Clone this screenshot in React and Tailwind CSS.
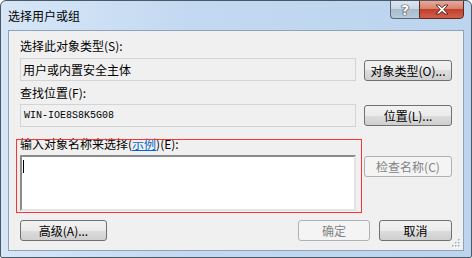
import React from 'react';

const cjk = "font-['Noto_Sans_CJK_SC',sans-serif]";

const Btn = ({ children, disabled, className = '' }) => (
  <div
    className={`h-[21px] rounded-[3px] border flex items-center justify-center text-[12px] leading-[12px] ${cjk} ${
      disabled
        ? 'border-[#adb2b5] bg-[#f4f4f4] text-[#838383]'
        : 'border-[#707070] bg-[linear-gradient(#f2f2f2_0%,#ebebeb_50%,#dddddd_50%,#cfcfcf_100%)] text-black'
    } ${className}`}
  >
    {children}
  </div>
);

const Field = ({ children }) => (
  <div className="h-[23px] w-[336px] border border-[#d4d4d4] bg-[#f0f0f0] px-[2px] flex items-center">
    {children}
  </div>
);

const SizeGrip = () => (
  <svg width="10" height="10" viewBox="0 0 10 10" className="absolute right-[2px] bottom-[2px]">
    {[
      [7, 1],
      [4, 4],
      [7, 4],
      [1, 7],
      [4, 7],
      [7, 7],
    ].map(([x, y]) => (
      <g key={`${x}-${y}`}>
        <rect x={x + 1} y={y + 1} width="1.5" height="1.5" fill="#ffffff" />
        <rect x={x} y={y} width="1.5" height="1.5" fill="#a0a8b2" />
      </g>
    ))}
  </svg>
);

export default function App() {
  return (
    <div className="w-[472px] h-[258px] bg-white">
      <div className="relative w-[472px] h-[258px] border border-[#4b5866] rounded-t-[6px] rounded-b-[2px] bg-[linear-gradient(90deg,#d6e6f7_0%,#c3d9f1_40%,#bcd4ee_100%)] overflow-hidden">
        {/* title bar */}
        <div className="h-[29px] flex items-start">
          <div className={`pl-[7px] pt-[8px] text-[12px] leading-[14px] text-black ${cjk}`}>选择用户或组</div>
          <div className="ml-auto mr-[7px] flex h-[19px] -mt-px">
            <div className="w-[29px] h-[19px] border border-[#5b6777] border-r-0 rounded-bl-[4px] bg-[linear-gradient(#dbe6f1_0%,#c8d6e4_45%,#a9bccf_50%,#b8cadb_100%)] flex items-center justify-center">
              <span className="text-white font-bold text-[14px] leading-[14px] font-['DejaVu_Sans',sans-serif] [text-shadow:0_0_1px_#333,0_0_1px_#333,0_0_1px_#333]">?</span>
            </div>
            <div className="w-[45px] h-[19px] border border-[#5a2a22] rounded-br-[4px] bg-[linear-gradient(#e9a99b_0%,#d88370_45%,#c2402c_50%,#d0604b_100%)] flex items-center justify-center">
              <svg width="14" height="11" viewBox="0 0 14 11">
                <path
                  d="M1 1 L4 1 L7 3.6 L10 1 L13 1 L8.8 5.5 L13 10 L10 10 L7 7.4 L4 10 L1 10 L5.2 5.5 Z"
                  fill="#ffffff"
                  stroke="#4a2018"
                  strokeWidth="0.9"
                  strokeLinejoin="round"
                />
              </svg>
            </div>
          </div>
        </div>

        {/* client area */}
        <div className="ml-[7px] w-[456px] h-[221px] border border-[#8fa3b8] bg-[#f0f0f0] relative">
          <div className={`pl-[11px] pt-[9px] text-[12px] text-black ${cjk}`}>
            <div className="h-[12px] leading-[12px]">选择此对象类型(S):</div>
            <div className="mt-[6px] flex items-start">
              <Field>
                <span className="leading-[12px]">用户或内置安全主体</span>
              </Field>
              <Btn className="ml-[8px] mt-[2px] w-[88px]">对象类型(O)...</Btn>
            </div>

            <div className="mt-[6px] h-[12px] leading-[12px]">查找位置(F):</div>
            <div className="mt-[5px] flex items-start">
              <Field>
                <span className="font-['Liberation_Mono',monospace] text-[10px] leading-[12px] pl-[1px]">WIN-IOE8S8K5G08</span>
              </Field>
              <Btn className="ml-[8px] mt-[1px] w-[88px]">位置(L)...</Btn>
            </div>

            <div className="mt-[11px] h-[12px] leading-[12px]">
              输入对象名称来选择(<span className="text-[#0066cc] underline">示例</span>)(E):
            </div>
            <div className="mt-[5px] flex items-start">
              <div className="w-[336px] h-[56px] border-2 border-t-[#8a8a8a] border-l-[#8a8a8a] border-r-[#e3e3e3] border-b-[#e3e3e3] bg-white pl-[1px] pt-[3px]">
                <div className="w-px h-[13px] bg-black" />
              </div>
              <Btn disabled className="ml-[8px] mt-[1px] w-[88px]">检查名称(C)</Btn>
            </div>

            <div className="mt-[9px] flex items-start pr-[11px]">
              <Btn className="w-[87px]">高级(A)...</Btn>
              <Btn disabled className="ml-auto w-[72px]">确定</Btn>
              <Btn className="ml-[9px] w-[73px]">取消</Btn>
            </div>
          </div>

          {/* highlight annotation */}
          <div className="absolute left-[7px] top-[108px] w-[346px] h-[74px] border border-[#ff3333] pointer-events-none" />
          <SizeGrip />
        </div>
      </div>
    </div>
  );
}
